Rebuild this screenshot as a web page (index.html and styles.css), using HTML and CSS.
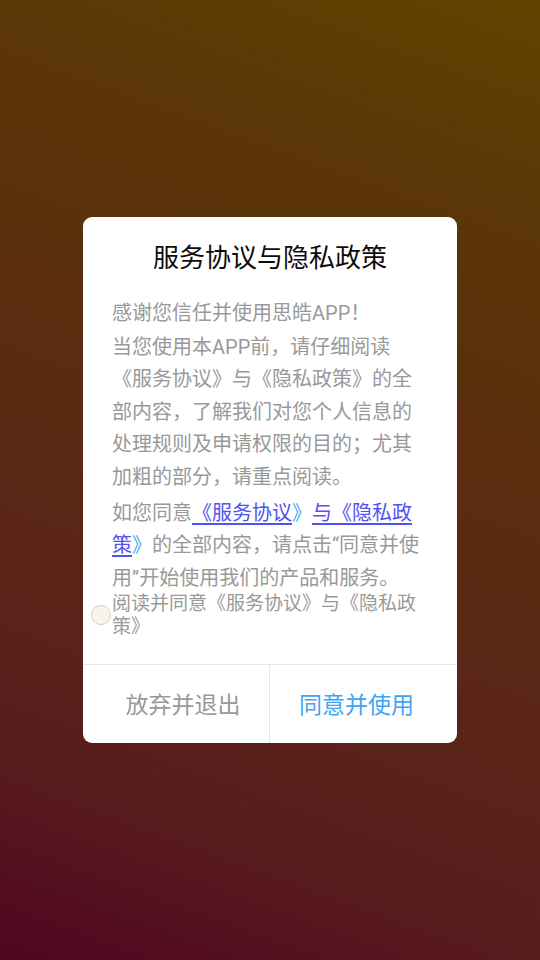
FILE: index.html
```html
<!DOCTYPE html>
<html lang="zh-CN">
<head>
<meta charset="utf-8">
<title>服务协议与隐私政策</title>
<link rel="stylesheet" href="styles.css">
</head>
<body>
<div class="screen">
  <div class="dialog">
    <h1 class="title">服务协议与隐私政策</h1>
    <div class="content">
      <p class="para p1">感谢您信任并使用思皓APP！</p>
      <p class="para p2">当您使用本APP前，请仔细阅读《服务协议》与《隐私政策》的全部内容，了解我们对您个人信息的处理规则及申请权限的目的；尤其加粗的部分，请重点阅读。</p>
      <p class="para p3">如您同意<span class="link">《服务协议</span><span class="bracket">》</span><span class="link">与《隐私政策</span><span class="bracket">》</span>的全部内容，请点击“同意并使用”开始使用我们的产品和服务。</p>
    </div>
    <div class="agree">
      <span class="check"></span>
      <span class="agree-text">阅读并同意《服务协议》与《隐私政策》</span>
    </div>
    <div class="actions">
      <div class="btn btn-cancel">放弃并退出</div>
      <div class="btn btn-ok">同意并使用</div>
    </div>
  </div>
</div>
</body>
</html>
```
FILE: styles.css
```css
* { box-sizing: border-box; }
html, body {
  margin: 0;
  padding: 0;
  width: 540px;
  height: 960px;
  overflow: hidden;
}
body {
  font-family: Roboto, "Noto Sans CJK SC", sans-serif;
  background: linear-gradient(200deg, #624400 0%, #5b3706 17%, #5a2c10 45%, #5a2319 68%, #571b1d 83%, #4f0522 100%);
}
.screen {
  width: 540px;
  height: 960px;
  display: flex;
  align-items: center;
  justify-content: center;
}
.dialog {
  width: 374px;
  background: #ffffff;
  border-radius: 9px;
  overflow: hidden;
}
.title {
  margin: 0;
  padding-top: 23px;
  font-size: 26px;
  line-height: 36px;
  font-weight: normal;
  color: #0c0c0c;
  text-align: center;
}
.content {
  padding: 21px 37px 0 29px;
  color: #999999;
  font-size: 20px;
  line-height: 32.4px;
}
.para { margin: 0; }
.p2 { margin-top: 1.6px; }
.p3 { margin-top: 3.6px; }
.link {
  color: #5252f2;
  text-decoration: underline;
  text-underline-offset: 3px;
}
.bracket { color: #45a8f6; }
.agree {
  display: flex;
  align-items: center;
  padding: 0 0 0 8px;
  margin-top: -1.5px;
  margin-bottom: 25.5px;
}
.check {
  flex: none;
  width: 20px;
  height: 20px;
  border-radius: 50%;
  background: #f8f4ec;
  border: 1px solid #d9cfbd;
  margin-right: 1px;
}
.agree-text {
  flex: none;
  width: 314px;
  color: #999999;
  font-size: 19px;
  line-height: 23px;
}
.actions {
  display: grid;
  grid-template-columns: 187px 1fr;
  border-top: 1px solid #e6e6e6;
  height: 79px;
}
.btn {
  display: flex;
  align-items: center;
  justify-content: center;
  font-size: 23px;
  padding-bottom: 1px;
}
.btn-cancel {
  color: #999999;
  padding-left: 14px;
  border-right: 1px solid #e6e6e6;
}
.btn-ok {
  color: #3ea5f5;
  padding-right: 14px;
}
```
